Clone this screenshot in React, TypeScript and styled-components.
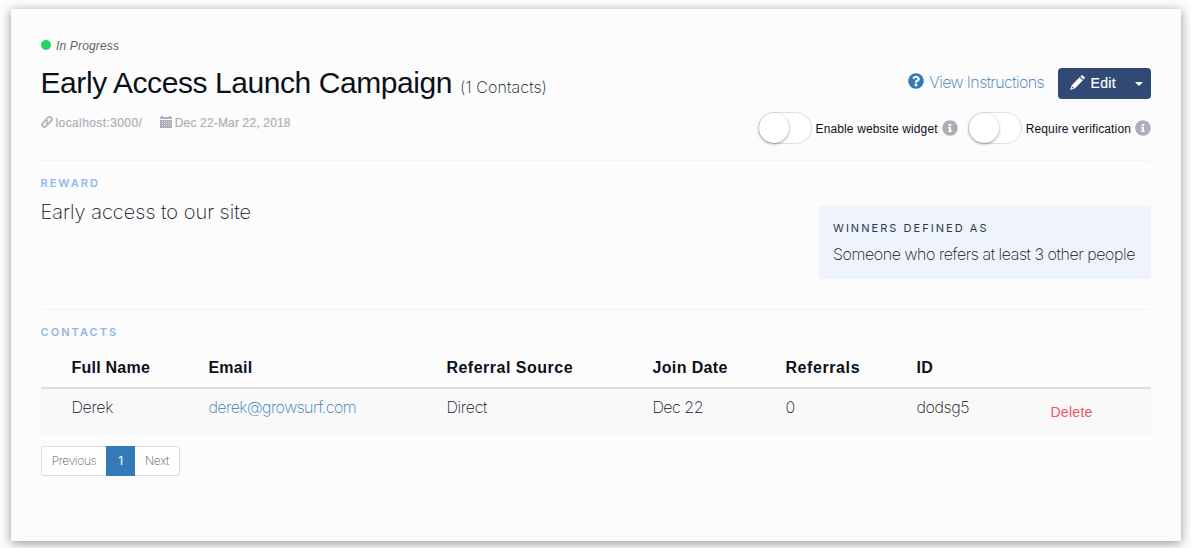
import React from 'react';
import styled, { createGlobalStyle } from 'styled-components';
import { FaInfoCircle, FaQuestionCircle } from 'react-icons/fa';

const sans = '"Liberation Sans", Arial, sans-serif';
const light = 'Inter, "Liberation Sans", sans-serif';

const GlobalStyle = createGlobalStyle`
  * { box-sizing: border-box; }
  html { background: #fcfcfc; }
  body { margin: 0; min-height: 548px; padding: 9px 0 7px 11px; color: #0a111b; font-family: ${sans}; }
`;

const Card = styled.main`
  width: 1170px;
  height: 532px;
  padding: 29px 30px 0;
  background: #fcfcfc;
  box-shadow: 0 2px 10px rgba(0, 0, 0, 0.42);
  white-space: nowrap;
`;

const Status = styled.div`
  display: flex;
  align-items: center;
  gap: 5px;
  height: 16px;
  font: italic 12px/16px ${sans};
  letter-spacing: 0.16px;
  color: #5d636d;
`;

const StatusDot = styled.span`
  width: 10px;
  height: 10px;
  margin-top: -2px;
  border-radius: 50%;
  background: #20d466;
`;

const Columns = styled.div`
  display: flex;
  justify-content: space-between;
`;

const Title = styled.h1`
  display: flex;
  align-items: baseline;
  margin: 11px 0 0 -0.5px;
  height: 36px;
  font: 400 30px/36px ${sans};
  letter-spacing: -0.43px;
`;

const Count = styled.small`
  margin-left: 8px;
  font: 200 16px/20px ${light};
  letter-spacing: 0.12px;
`;

const Meta = styled.div`
  display: flex;
  gap: 18px;
  margin-top: 14px;
  font: 12px/16px ${sans};
  color: #abb0b7;
`;

const MetaItem = styled.span<{ $spacing: number }>`
  display: flex;
  align-items: center;
  gap: 2.5px;
  letter-spacing: ${(p) => p.$spacing}px;
  -webkit-text-stroke: 0.2px;
  svg { display: block; margin-top: -2px; }
`;

const Controls = styled.div`
  display: flex;
  flex-direction: column;
  align-items: flex-end;
  padding-top: 30px;
`;

const Actions = styled.div`
  display: flex;
  align-items: center;
  height: 31px;
`;

const Instructions = styled.a`
  display: flex;
  align-items: center;
  gap: 5px;
  margin-right: 14px;
  font: 200 16px/20px ${light};
  letter-spacing: -0.59px;
  color: #337ab7;
  svg { margin-top: -5px; }
  span { margin-top: -3px; }
`;

const EditGroup = styled.button`
  display: flex;
  align-items: center;
  width: 93px;
  height: 31px;
  padding: 0 8px 0 12px;
  border: 0;
  border-radius: 4px;
  background: #314a75;
  color: #fff;
  font: 14px/20px ${sans};
  letter-spacing: 0.3px;
  -webkit-text-stroke: 0.2px;
  svg { margin-top: -2px; }
`;

const EditLabel = styled.span`
  margin: -1px 0 0 5.5px;
`;

const Caret = styled.i`
  margin: 1px 0 0 auto;
  border: 4px solid transparent;
  border-top-color: #fff;
  border-bottom: 0;
`;

const Toggles = styled.div`
  display: flex;
  gap: 10px;
  height: 32px;
  margin-top: 13px;
`;

const Toggle = styled.label`
  display: flex;
  align-items: center;
  gap: 4px;
  height: 32px;
  font: 12px/16px ${sans};
  letter-spacing: 0.13px;
  svg { color: #abb0b7; }
`;

const ToggleText = styled.span`
  padding-top: 2px;
`;

const Switch = styled.span`
  width: 54px;
  height: 32px;
  border: 1px solid #dfdfdf;
  border-radius: 16px;
  background: #fff;
`;

const Knob = styled.span`
  display: block;
  width: 30px;
  height: 30px;
  border-radius: 50%;
  background: #fff;
  box-shadow: 0 1px 3px rgba(0, 0, 0, 0.4);
`;

const Rule = styled.hr<{ $gap: number }>`
  height: 1px;
  margin: ${(p) => p.$gap}px 2px 0 1px;
  border: 0;
  background: #eef2fc;
`;

const Heading = styled.h2<{ $spacing: number }>`
  margin: 14px 0 0 -0.5px;
  font: 600 11px/16px ${light};
  letter-spacing: ${(p) => p.$spacing}px;
  color: #94b4f0;
`;

const Reward = styled.p`
  margin: 8px 0 0 -0.5px;
  font: 200 20px/26px ${light};
`;

const Winners = styled.section`
  width: 332px;
  height: 73px;
  margin-top: 45px;
  padding: 14px;
  background: #eef3fc;
`;

const WinnersLabel = styled.h3`
  margin: 0;
  font: 400 11px/16px ${light};
  letter-spacing: 2.04px;
  color: #2b3950;
`;

const WinnersText = styled.p`
  margin: 7px 0 0;
  font: 200 16px/22px ${light};
  letter-spacing: -0.43px;
`;

const Table = styled.div`
  margin-top: 7px;
`;

const TableRow = styled.div`
  display: grid;
  grid-template-columns: 137px 238px 206px 133px 131px 134px 1fr;
  padding-left: 30.4px;
`;

const HeadRow = styled(TableRow)`
  height: 42px;
  border-bottom: 2px solid #ddd;
  font: bold 16px/41px ${sans};
`;

const HeadCell = styled.span<{ $spacing: number }>`
  letter-spacing: ${(p) => p.$spacing}px;
`;

const BodyRow = styled(TableRow)`
  height: 47px;
  background: #f9f9f9;
  font: 200 16px/36px ${light};
`;

const Cell = styled.span<{ $spacing: number }>`
  letter-spacing: ${(p) => p.$spacing}px;
`;

const Email = styled(Cell)`
  color: #337ab7;
`;

const Delete = styled.a`
  font: 14px/47px ${sans};
  letter-spacing: 0.3px;
  color: #ec5563;
`;

const Pager = styled.nav`
  display: flex;
  width: 139px;
  height: 30px;
  margin-top: 10px;
  border: 1px solid #ddd;
  border-radius: 3px;
  background: #fff;
  font: 200 12px/28px ${light};
  letter-spacing: -0.35px;
  color: #555;
  text-align: center;
`;

const Page = styled.span<{ $width: number; $active?: boolean }>`
  width: ${(p) => p.$width}px;
  ${(p) => p.$active && 'margin: -1px 0; line-height: 30px; background: #337ab7; color: #fff; font-weight: 400;'}
`;

const LinkIcon = () => (
  <svg width="12" height="12" viewBox="0 0 12 12" fill="none" stroke="currentColor" strokeWidth="1.6" strokeLinecap="round">
    <path d="M5 3.6 7.1 1.5a2.1 2.1 0 0 1 3 0l.3.3a2.1 2.1 0 0 1 0 3L8.3 6.9a2.1 2.1 0 0 1-3 0" />
    <path d="M7 8.3 4.9 10.4a2.1 2.1 0 0 1-3 0l-.3-.3a2.1 2.1 0 0 1 0-3L3.7 5a2.1 2.1 0 0 1 3 0" />
  </svg>
);

const CalendarIcon = () => (
  <svg width="12" height="12" viewBox="0 0 12 12" fill="currentColor">
    <path d="M0 1h1V0h2v1h6V0h2v1h1v2H0z" />
    <path fillRule="evenodd" d="M0 4h12v8H0z" />
    <path stroke="#fcfcfc" strokeOpacity=".55" strokeWidth="1" strokeDasharray="1 1" d="M2 5.5h9M2 7.5h9M2 9.5h9" />
  </svg>
);

const PencilIcon = () => (
  <svg width="15" height="15" viewBox="0 0 15 15" fill="currentColor">
    <path d="M11.3.6c.4-.5.9-.5 1.4-.1l1.8 1.6c.5.4.5.9.1 1.4l-.9 1-3.3-3z" />
    <path fillRule="evenodd" d="m9.6 2.3 3.3 3-7.8 8L0 15l1.8-4.8zM2.5 11.5l-1 2.1 2.2-.8z" />
  </svg>
);

const columns: [string, number][] = [
  ['Full Name', 0.25], ['Email', 0.25], ['Referral Source', 0.5], ['Join Date', 0.38], ['Referrals', 0.6], ['ID', 0.5],
];

const toggles = ['Enable website widget', 'Require verification'];

export default function App() {
  return (
    <>
      <GlobalStyle />
      <Card>
        <Columns>
          <div>
            <Status><StatusDot />In Progress</Status>
            <Title>Early Access Launch Campaign<Count>(1 Contacts)</Count></Title>
            <Meta>
              <MetaItem $spacing={0.4}><LinkIcon />localhost:3000/</MetaItem>
              <MetaItem $spacing={0.17}><CalendarIcon />Dec 22-Mar 22, 2018</MetaItem>
            </Meta>
          </div>
          <Controls>
            <Actions>
              <Instructions><FaQuestionCircle size={16} /><span>View Instructions</span></Instructions>
              <EditGroup><PencilIcon /><EditLabel>Edit</EditLabel><Caret /></EditGroup>
            </Actions>
            <Toggles>
              {toggles.map((label) => (
                <Toggle key={label}>
                  <Switch><Knob /></Switch>
                  <ToggleText>{label}</ToggleText>
                  <FaInfoCircle size={16} />
                </Toggle>
              ))}
            </Toggles>
          </Controls>
        </Columns>
        <Rule $gap={16} />
        <Columns>
          <div>
            <Heading $spacing={2}>REWARD</Heading>
            <Reward>Early access to our site</Reward>
          </div>
          <Winners>
            <WinnersLabel>WINNERS DEFINED AS</WinnersLabel>
            <WinnersText>Someone who refers at least 3 other people</WinnersText>
          </Winners>
        </Columns>
        <Rule $gap={30} />
        <Heading $spacing={2.05}>CONTACTS</Heading>
        <Table>
          <HeadRow>
            {columns.map(([name, spacing]) => <HeadCell key={name} $spacing={spacing}>{name}</HeadCell>)}
          </HeadRow>
          <BodyRow>
            <Cell $spacing={-0.3}>Derek</Cell>
            <Email $spacing={-0.54}>derek@growsurf.com</Email>
            <Cell $spacing={-0.3}>Direct</Cell>
            <Cell $spacing={-0.5}>Dec 22</Cell>
            <Cell $spacing={0}>0</Cell>
            <Cell $spacing={-0.4}>dodsg5</Cell>
            <Delete>Delete</Delete>
          </BodyRow>
        </Table>
        <Pager>
          <Page $width={64}>Previous</Page>
          <Page $width={29} $active>1</Page>
          <Page $width={44}>Next</Page>
        </Pager>
      </Card>
    </>
  );
}
